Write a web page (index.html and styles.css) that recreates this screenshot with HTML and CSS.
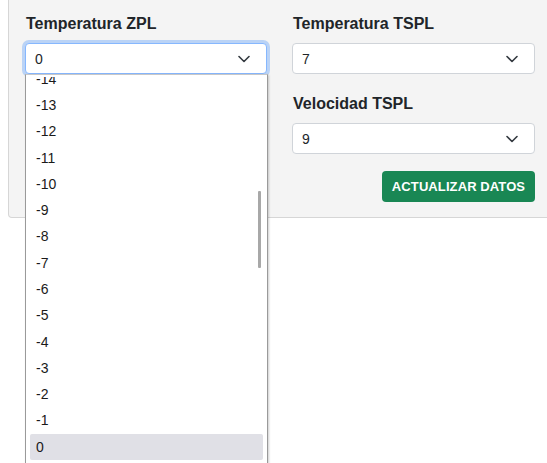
FILE: index.html
```html
<!DOCTYPE html>
<html>
<head>
  <title>Configuración de impresora</title>
  <link rel="stylesheet" href="styles.css">
</head>
<body>
  <div class="panel">
    <div class="row">
      <div class="col">
        <label class="field-label">Temperatura ZPL</label>
        <div class="select focused">
          <span>0</span>
          <svg class="chevron" width="12" height="8" viewBox="0 0 12 8"><path d="M1 1.5 6 6.5 11 1.5" fill="none" stroke="#343a40" stroke-width="1.6" stroke-linecap="round" stroke-linejoin="round"/></svg>
        </div>

        <!-- open list of the ZPL select -->
        <div class="dropdown">
          <div class="scroller">
            <ul class="options">
              <li>-14</li>
              <li>-13</li>
              <li>-12</li>
              <li>-11</li>
              <li>-10</li>
              <li>-9</li>
              <li>-8</li>
              <li>-7</li>
              <li>-6</li>
              <li>-5</li>
              <li>-4</li>
              <li>-3</li>
              <li>-2</li>
              <li>-1</li>
              <li class="selected">0</li>
            </ul>
          </div>
          <div class="thumb"></div>
        </div>
      </div>

      <div class="col">
        <label class="field-label">Temperatura TSPL</label>
        <div class="select">
          <span>7</span>
          <svg class="chevron" width="12" height="8" viewBox="0 0 12 8"><path d="M1 1.5 6 6.5 11 1.5" fill="none" stroke="#343a40" stroke-width="1.6" stroke-linecap="round" stroke-linejoin="round"/></svg>
        </div>

        <label class="field-label second">Velocidad TSPL</label>
        <div class="select">
          <span>9</span>
          <svg class="chevron" width="12" height="8" viewBox="0 0 12 8"><path d="M1 1.5 6 6.5 11 1.5" fill="none" stroke="#343a40" stroke-width="1.6" stroke-linecap="round" stroke-linejoin="round"/></svg>
        </div>

        <div class="actions">
          <button type="button" class="btn-save">ACTUALIZAR DATOS</button>
        </div>
      </div>
    </div>
  </div>
</body>
</html>
```

FILE: styles.css
```css
body {
  margin: 0;
  height: 463px;
  overflow: hidden;
  background-color: #fff;
  font-family: "Liberation Sans", Arial, sans-serif;
  color: #212529;
}

.panel {
  margin-left: 8px;
  margin-right: -20px;
  background-color: #f4f4f4;
  border: 1px solid #d6d6d6;
  border-top: none;
  border-radius: 0 0 4px 4px;
  padding: 12px 0 15px 16px;
}

.row {
  display: grid;
  grid-template-columns: 243px 243px;
  column-gap: 24px;
}

.col {
  position: relative;
  display: flex;
  flex-direction: column;
}

.field-label {
  display: block;
  font-size: 16px;
  font-weight: bold;
  line-height: 24px;
  margin-bottom: 7px;
  padding-left: 1px;
}

.field-label.second {
  margin-top: 18px;
  margin-bottom: 7px;
}

.select {
  box-sizing: border-box;
  height: 31px;
  display: flex;
  align-items: center;
  justify-content: space-between;
  padding: 0 16px 0 9px;
  background-color: #fff;
  border: 1px solid #d0d4d9;
  border-radius: 4px;
  font-size: 14px;
}

.select.focused {
  border-color: #86b7fe;
  box-shadow: 0 0 0 3px rgba(13, 110, 253, 0.25);
  width: 242px;
}

.chevron {
  display: block;
}

.dropdown {
  position: absolute;
  left: 0;
  top: 62px;
  width: 243px;
  height: 389px;
  box-sizing: border-box;
  padding-top: 2px;
  background-color: #fff;
  border: 1px solid #9a9a9a;
  border-top-color: #c8c8c8;
  border-bottom: none;
  box-shadow: 1px 1px 2px rgba(0, 0, 0, 0.2);
}

.scroller {
  height: 100%;
  overflow: hidden;
}

.options {
  list-style: none;
  margin: -11.4px 0 0 0;
  padding: 0 4px;
}

.options li {
  height: 26.3px;
  line-height: 26.3px;
  padding-left: 6px;
  font-size: 14px;
  color: #1a1a1a;
  border-radius: 2px;
}

.options li.selected {
  background-color: #e0e0e6;
}

.thumb {
  position: absolute;
  left: 232px;
  top: 116px;
  width: 3px;
  height: 77px;
  background-color: #a8a8a8;
  border-radius: 1px;
}

.actions {
  display: flex;
  justify-content: flex-end;
  margin-top: 17px;
}

.btn-save {
  height: 31px;
  width: 153px;
  padding: 0;
  background-color: #198754;
  color: #fff;
  border: none;
  border-radius: 4px;
  font-family: "Liberation Sans", Arial, sans-serif;
  font-size: 13px;
  font-weight: bold;
  letter-spacing: 0.1px;
  cursor: pointer;
}
```
